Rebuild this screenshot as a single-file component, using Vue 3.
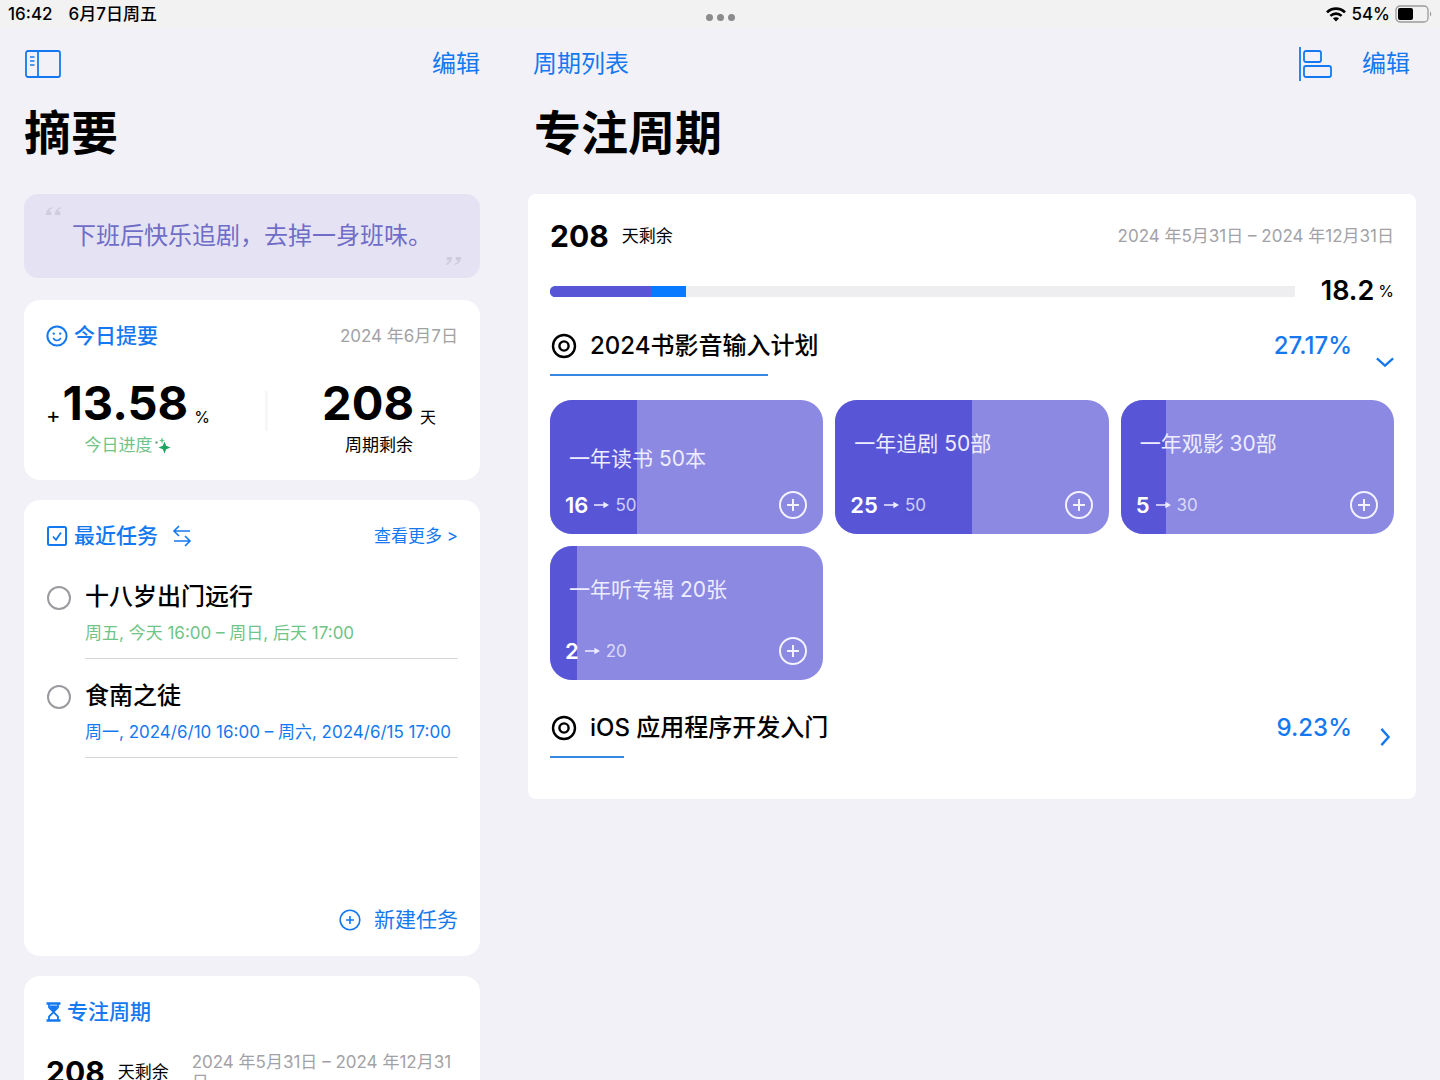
<script setup>
import { ref } from 'vue'

const tasks = ref([
  { id: 1, title: '十八岁出门远行', time: '周五, 今天 16:00 – 周日, 后天 17:00', tone: 'green', done: false },
  { id: 2, title: '食南之徒', time: '周一, 2024/6/10 16:00 – 周六, 2024/6/15 17:00', tone: 'blue', done: false }
])

const goals = ref([
  {
    id: 1,
    title: '2024书影音输入计划',
    percent: 27.17,
    open: true,
    items: [
      { id: 11, title: '一年读书 50本', done: 16, total: 50, low: true },
      { id: 12, title: '一年追剧 50部', done: 25, total: 50 },
      { id: 13, title: '一年观影 30部', done: 5, total: 30 },
      { id: 14, title: '一年听专辑 20张', done: 2, total: 20 }
    ]
  },
  { id: 2, title: 'iOS 应用程序开发入门', percent: 9.23, open: false, items: [] }
])
</script>

<template>
  <div class="app">
    <header class="status">
      <div class="status-side">
        <span>16:42</span>
        <span>6月7日周五</span>
      </div>
      <button class="dots" aria-label="多任务"><i></i><i></i><i></i></button>
      <div class="status-side status-right">
        <svg class="wifi" viewBox="0 0 20 15" aria-hidden="true">
          <g fill="none" stroke="#000" stroke-width="2.6">
            <path d="M1 5.4C6 .4 14 .4 19 5.4" />
            <path d="M4.4 8.9C7.6 5.9 12.4 5.9 15.6 8.9" />
          </g>
          <path d="M10 14.4L6.9 11.3C8.6 9.8 11.4 9.8 13.1 11.3Z" />
        </svg>
        <span>54%</span>
        <svg class="battery" viewBox="0 0 37 18" aria-hidden="true">
          <rect x="1" y="1" width="32" height="16" rx="4" fill="none" stroke="#9a9a9c" stroke-width="1.3" />
          <rect x="3" y="3" width="15" height="12" rx="2" />
          <path d="M35 6.5c1.6.8 1.6 4.2 0 5z" fill="#9a9a9c" />
        </svg>
      </div>
    </header>

    <div class="columns">
      <aside class="sidebar">
        <nav class="bar">
          <button class="link" aria-label="切换边栏">
            <svg class="i-panel" viewBox="0 0 38 30" fill="none" stroke="currentColor" stroke-width="1.8" aria-hidden="true">
              <rect x="2" y="2" width="34" height="26" rx="2" />
              <path d="M14 2v26" />
              <path d="M6 8h4.500M6 12h4.500M6 16h4.500" stroke-width="1.400" />
            </svg>
          </button>
          <button class="link">编辑</button>
        </nav>
        <h1>摘要</h1>

        <blockquote class="quote">
          <svg class="mark mark-open" viewBox="0 0 20 12" aria-hidden="true"><path d="M8 1C4 2 1 5 1 10h6V6H4.500C5 4 6 3 8 2.500zM18 1c-4 1-7 4-7 9h6V6h-2.500C15 4 16 3 18 2.500z" /></svg>
          <p>下班后快乐追剧，去掉一身班味。</p>
          <svg class="mark mark-close" viewBox="0 0 20 12" aria-hidden="true"><path d="M2 11c4-1 7-4 7-9H3v4h2.500C5 8 4 9 2 9.500zM12 11c4-1 7-4 7-9h-6v4h2.500C15 8 14 9 12 9.500z" /></svg>
        </blockquote>

        <section class="card today-card">
          <div class="card-head">
            <h2>
              <svg class="i-head" viewBox="0 0 22 22" fill="none" stroke="currentColor" stroke-width="2" aria-hidden="true">
                <circle cx="11" cy="11" r="9.600" />
                <path d="M7.500 13.500c1.500 2.600 5.500 2.600 7 0" stroke-width="1.600" stroke-linecap="round" />
                <circle cx="7.800" cy="8.600" r="1.200" fill="currentColor" stroke="none" />
                <circle cx="14.200" cy="8.600" r="1.200" fill="currentColor" stroke="none" />
              </svg>
              今日提要
            </h2>
            <time>2024 年6月7日</time>
          </div>
          <div class="stats">
            <div class="stat">
              <p class="figure"><span class="plus">+</span><strong>13.58</strong><small>%</small></p>
              <p class="caption green">
                今日进度
                <svg class="i-spark" viewBox="0 0 17 17" aria-hidden="true">
                  <path d="M10.500 4.500l1.700 4.300 4.300 1.700-4.300 1.700-1.700 4.300-1.700-4.300-4.300-1.700 4.300-1.700z" fill="#1fa463" />
                  <path d="M8 0l.8 2.700 2.200.8-2.200.8L8 7l-.8-2.700L5 3.500l2.200-.8z" fill="#58c98a" />
                  <circle cx="2.500" cy="5.500" r="1.300" fill="#7aa98d" />
                </svg>
              </p>
            </div>
            <div class="divider"></div>
            <div class="stat">
              <p class="figure"><strong>208</strong><small>天</small></p>
              <p class="caption">周期剩余</p>
            </div>
          </div>
        </section>

        <section class="card tasks-card">
          <div class="card-head">
            <h2>
              <svg class="i-head" viewBox="0 0 22 22" fill="none" stroke="currentColor" stroke-width="2" aria-hidden="true">
                <rect x="2" y="2" width="18" height="18" rx="1.500" />
                <path d="M7 11.500l3 3.300L15 7.500" stroke-width="1.800" />
              </svg>
              最近任务
              <button class="swap" aria-label="切换">
                <svg viewBox="0 0 20 22" fill="none" stroke="currentColor" stroke-width="1.600" aria-hidden="true">
                  <path d="M18 6H2M7 1L2 6l5 5M2 16h16M13 11l5 5-5 5" />
                </svg>
              </button>
            </h2>
            <a class="more" href="#">查看更多 &gt;</a>
          </div>
          <ul class="tasks">
            <li v-for="task in tasks" :key="task.id">
              <input :id="'task-' + task.id" v-model="task.done" type="checkbox" />
              <div class="task-body">
                <label :for="'task-' + task.id">{{ task.title }}</label>
                <p :class="task.tone">{{ task.time }}</p>
              </div>
            </li>
          </ul>
          <button class="new-task">
            <svg class="i-head" viewBox="0 0 22 22" fill="none" stroke="currentColor" stroke-width="1.600" aria-hidden="true">
              <circle cx="11" cy="11" r="9.800" />
              <path d="M11 7v8M7 11h8" />
            </svg>
            新建任务
          </button>
        </section>

        <section class="card">
          <div class="card-head">
            <h2>
              <svg class="i-glass" viewBox="0 0 14 20" fill="none" stroke="currentColor" aria-hidden="true">
                <path d="M0 1.500h14M0 18.500h14" stroke-width="2.400" />
                <path d="M2.500 2v3.500L7 10l4.500-4.500V2M2.500 18v-3.500L7 10l4.500 4.500V18" stroke-width="1.800" />
                <path d="M3 4h8L7 9z" fill="currentColor" />
              </svg>
              专注周期
            </h2>
          </div>
          <div class="cycle">
            <strong>208</strong>
            <span>天剩余</span>
            <time>2024 年5月31日 – 2024 年12月31日</time>
          </div>
        </section>
      </aside>

      <main class="main">
        <nav class="bar">
          <button class="link list-link">周期列表</button>
          <div class="bar-actions">
            <button class="link" aria-label="时间线">
              <svg class="i-align" viewBox="0 0 36 36" fill="none" stroke="currentColor" stroke-width="1.800" aria-hidden="true">
                <path d="M2 1v34" />
                <rect x="6" y="5" width="17" height="11" rx="2" />
                <rect x="6" y="20" width="27" height="11" rx="2" />
              </svg>
            </button>
            <button class="link">编辑</button>
          </div>
        </nav>
        <h1 class="indent">专注周期</h1>

        <section class="period">
          <div class="period-head">
            <p class="remain"><strong>208</strong><span>天剩余</span></p>
            <time>2024 年5月31日 – 2024 年12月31日</time>
          </div>
          <div class="progress">
            <div class="track" role="progressbar" aria-valuenow="18.2" aria-valuemin="0" aria-valuemax="100">
              <div class="bar-blue" :style="{ width: '18.2%' }"></div>
              <div class="bar-violet" :style="{ width: '13.6%' }"></div>
            </div>
            <p class="total"><strong>18.2</strong><small>%</small></p>
          </div>

          <article v-for="goal in goals" :key="goal.id" class="goal">
            <div class="goal-head">
              <div class="goal-main">
                <h3>
                  <svg class="i-target" viewBox="0 0 26 26" fill="none" stroke="currentColor" stroke-width="2.400" aria-hidden="true">
                    <circle cx="13" cy="13" r="11" />
                    <circle cx="13" cy="13" r="4.600" />
                  </svg>
                  <span>{{ goal.title }}</span>
                  <b>{{ goal.percent }}%</b>
                </h3>
                <div class="underline" :style="{ width: goal.percent + '%' }"></div>
              </div>
              <button class="chevron" :class="{ closed: !goal.open }" :aria-label="goal.open ? '收起' : '展开'" @click="goal.open = !goal.open">
                <svg viewBox="0 0 20 20" fill="none" stroke="currentColor" stroke-width="2.600" aria-hidden="true">
                  <path d="M1 6l9 8 9-8" />
                </svg>
              </button>
            </div>
            <div v-if="goal.open && goal.items.length" class="tiles">
              <div v-for="item in goal.items" :key="item.id" class="tile" :class="{ low: item.low }">
                <div class="fill" :style="{ width: (item.done / item.total) * 100 + '%' }"></div>
                <h4>{{ item.title }}</h4>
                <div class="tile-foot">
                  <strong>{{ item.done }}</strong>
                  <svg class="i-arrow" viewBox="0 0 16 10" aria-hidden="true">
                    <path d="M0 5h13" fill="none" stroke="currentColor" stroke-width="1.800" />
                    <path d="M10 1.500L16 5l-6 3.500z" fill="currentColor" />
                  </svg>
                  <span>{{ item.total }}</span>
                  <button class="add" aria-label="增加">
                    <svg viewBox="0 0 30 30" fill="none" stroke="currentColor" stroke-width="2" aria-hidden="true">
                      <circle cx="15" cy="15" r="13" />
                      <path d="M15 9v12M9 15h12" />
                    </svg>
                  </button>
                </div>
              </div>
            </div>
          </article>
        </section>
      </main>
    </div>
  </div>
</template>

<style>
body {
  margin: 0;
  background: #f2f1f7;
}
</style>

<style scoped>
.app {
  --blue: #1479f0;
  --green: #6fc486;
  --violet: #5856d6;
  display: flex;
  flex-direction: column;
  height: 100vh;
  overflow: hidden;
  color: #000;
  font-family: Inter, "Noto Sans CJK SC", sans-serif;
  font-size: 17px;
  line-height: 24px;
}

h1, h2, h3, h4, p, ul, blockquote {
  margin: 0;
  padding: 0;
}

svg {
  display: block;
  flex: none;
}

button {
  padding: 0;
  border: 0;
  background: none;
  color: var(--blue);
  font: inherit;
  cursor: pointer;
}

.status {
  display: grid;
  grid-template-columns: 1fr auto 1fr;
  align-items: center;
  height: 28px;
  flex: none;
  padding: 0 8px;
  background: #f2f2f3;
  font-weight: 500;
}

.status-side {
  display: flex;
  align-items: center;
  gap: 16px;
}

.status-right {
  justify-content: flex-end;
  gap: 5px;
}

.wifi { width: 20px; height: 15px; }
.battery { width: 37px; height: 18px; }

.dots {
  display: flex;
  gap: 4px;
  padding-top: 6px;
}

.dots i {
  width: 7px;
  height: 7px;
  border-radius: 50%;
  background: #8b8b8e;
}

.columns {
  display: flex;
  flex: 1;
  min-height: 0;
}

.sidebar, .main {
  box-sizing: border-box;
  padding: 0 24px;
  overflow-y: auto;
  scrollbar-width: none;
}

.sidebar { width: 35%; flex: none; }
.main { flex: 1; min-width: 0; }

.bar {
  display: flex;
  align-items: center;
  justify-content: space-between;
  height: 72px;
}

.bar-actions {
  display: flex;
  align-items: center;
  gap: 28px;
  padding-right: 6px;
}

.link {
  font-size: 24px;
  line-height: 36px;
}

.list-link { padding-left: 5px; }
.i-panel { width: 38px; height: 30px; }
.i-align { width: 36px; height: 36px; }

h1 {
  margin-bottom: 28px;
  font-size: 47px;
  line-height: 66px;
  font-weight: 700;
}

.indent { padding-left: 6px; }

.quote {
  position: relative;
  display: flex;
  align-items: center;
  justify-content: center;
  height: 84px;
  margin-bottom: 22px;
  border-radius: 14px;
  background: #e5e3f3;
  color: #6f6dc8;
  font-size: 24px;
  line-height: 36px;
}

.mark {
  position: absolute;
  width: 18px;
  height: 11px;
  fill: #cfcddd;
}

.mark-open { top: 12px; left: 21px; }
.mark-close { right: 18px; bottom: 12px; }

.card {
  box-sizing: border-box;
  margin-bottom: 20px;
  padding: 20px 22px;
  border-radius: 16px;
  background: #fff;
}

.card-head {
  display: flex;
  align-items: center;
  justify-content: space-between;
  height: 32px;
}

h2 {
  display: flex;
  align-items: center;
  gap: 6px;
  color: var(--blue);
  font-size: 21px;
  line-height: 32px;
  font-weight: 500;
}

.i-head { width: 22px; height: 22px; }
.i-glass { width: 15px; height: 20px; }
.i-spark { width: 17px; height: 17px; }

time { color: #a2a2a6; }

.today-card { height: 180px; }

.stats {
  display: flex;
  align-items: center;
  justify-content: space-between;
  padding: 27px 22px 0 0;
}

.figure {
  display: flex;
  align-items: flex-end;
  justify-content: center;
  gap: 6px;
}

.figure strong {
  font-size: 47px;
  line-height: 48px;
  font-weight: 700;
}

.figure .plus {
  margin-right: -4px;
  font-size: 22px;
}

.figure small {
  font-size: 16px;
  line-height: 20px;
}

.caption {
  display: flex;
  align-items: center;
  justify-content: center;
  gap: 2px;
  padding-top: 6px;
}

.green { color: var(--green); }
.blue { color: var(--blue); }

.divider {
  width: 3px;
  height: 40px;
  margin-bottom: 14px;
  background: #f7f7f9;
}

.tasks-card {
  display: flex;
  flex-direction: column;
  min-height: 456px;
}

.swap svg {
  width: 20px;
  height: 22px;
  margin-left: 8px;
}

.more {
  color: var(--blue);
  text-decoration: none;
}

.tasks {
  flex: 1;
  padding-top: 8px;
  list-style: none;
}

.tasks li {
  display: flex;
  gap: 14px;
}

.tasks input {
  flex: none;
  width: 24px;
  height: 24px;
  margin: 26px 0 0 1px;
  border: 2px solid #9b9b9f;
  border-radius: 50%;
  appearance: none;
}

.tasks input:checked { background: var(--blue); }

.task-body {
  box-sizing: border-box;
  flex: 1;
  height: 99px;
  padding-top: 19px;
  border-bottom: 1px solid #d8d8dc;
  white-space: nowrap;
}

.task-body label {
  display: block;
  font-size: 24px;
  line-height: 36px;
  font-weight: 500;
}

.task-body p { padding-top: 6px; }

.new-task {
  display: flex;
  align-items: center;
  align-self: flex-end;
  gap: 13px;
  font-size: 21px;
  line-height: 32px;
}

.cycle {
  display: flex;
  align-items: center;
  gap: 13px;
  padding-top: 24px;
}

.cycle strong, .remain strong {
  font-size: 30px;
  line-height: 40px;
  font-weight: 700;
}

.cycle span { white-space: nowrap; }

.cycle time {
  flex: 1;
  padding-left: 10px;
  line-height: 20px;
}

.period {
  padding: 22px 22px 41px;
  border-radius: 8px;
  background: #fff;
}

.period-head, .progress {
  display: flex;
  align-items: center;
  justify-content: space-between;
  height: 40px;
}

.remain {
  display: flex;
  align-items: center;
  gap: 13px;
}

.progress {
  gap: 26px;
  margin-top: 15px;
}

.track {
  position: relative;
  flex: 1;
  height: 11px;
  overflow: hidden;
  border-radius: 6px 0 0 6px;
  background: #eeedef;
}

.bar-blue, .bar-violet {
  position: absolute;
  inset: 0 auto 0 0;
  background: #087aff;
}

.bar-violet { background: var(--violet); }

.total {
  display: flex;
  align-items: center;
  gap: 4px;
}

.total strong { font-size: 27px; font-weight: 600; }
.total small { font-size: 16px; }

.goal { margin-top: 15px; }
.goal + .goal { margin-top: 28px; }

.goal-head {
  display: flex;
  align-items: flex-end;
}

.goal-main { flex: 1; }

h3 {
  display: flex;
  align-items: center;
  gap: 13px;
  padding-left: 1px;
  font-size: 24px;
  line-height: 40px;
  font-weight: 500;
}

h3 b {
  margin-left: auto;
  color: var(--blue);
  font-weight: 500;
}

.i-target { width: 26px; height: 26px; }

.underline {
  height: 2px;
  margin-top: 8px;
  background: #3487e2;
}

.chevron {
  display: flex;
  justify-content: flex-end;
  width: 42px;
  padding-bottom: 5px;
}

.chevron svg { width: 18px; height: 18px; }
.chevron.closed { padding-bottom: 12px; }
.chevron.closed svg { transform: rotate(-90deg); }

.tiles {
  display: grid;
  grid-template-columns: repeat(3, 1fr);
  gap: 12px;
  margin-top: 24px;
}

.tile {
  position: relative;
  display: flex;
  flex-direction: column;
  justify-content: space-between;
  box-sizing: border-box;
  height: 134px;
  padding: 28px 15px 14px;
  overflow: hidden;
  border-radius: 22px;
  background: #8b89e2;
  color: #eeedff;
}

.tile.low { padding-top: 43px; }

.fill {
  position: absolute;
  inset: 0 auto 0 0;
  background: var(--violet);
}

h4 {
  position: relative;
  padding-left: 4px;
  font-size: 21px;
  line-height: 32px;
  font-weight: 400;
}

.tile-foot {
  position: relative;
  display: flex;
  align-items: center;
  gap: 6px;
}

.tile-foot strong {
  color: #fff;
  font-size: 22px;
  font-weight: 600;
}

.tile-foot span { opacity: 0.8; }
.i-arrow { width: 15px; height: 10px; }

.add {
  margin-left: auto;
  color: #f3f2ff;
}

.add svg { width: 30px; height: 30px; }
</style>
